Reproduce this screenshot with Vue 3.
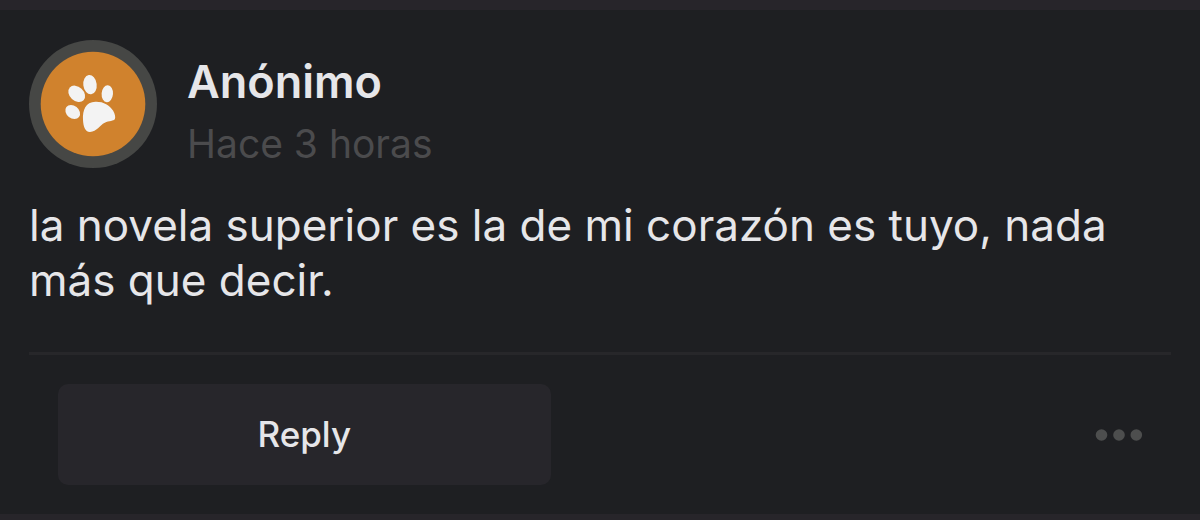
<script setup>
const comment = {
  author: 'Anónimo',
  time: 'Hace 3 horas',
  text: 'la novela superior es la de mi corazón es tuyo, nada más que decir.'
}
</script>

<template>
  <main class="feed">
    <article class="card">
      <header class="head">
        <svg class="avatar" viewBox="0 0 128 128" aria-hidden="true">
          <circle cx="64" cy="64" r="64" fill="#464745" />
          <circle cx="64" cy="64" r="52.3" fill="#d0822d" />
          <g fill="#f3f3f3">
            <ellipse cx="43.7" cy="72" rx="8" ry="6.2" transform="rotate(38 43.7 72)" />
            <ellipse cx="47.7" cy="53.8" rx="9.4" ry="7" transform="rotate(43 47.7 53.8)" />
            <ellipse cx="61" cy="44.7" rx="6.7" ry="9.7" transform="rotate(-7 61 44.7)" />
            <ellipse cx="78.3" cy="53.7" rx="5.7" ry="8.5" transform="rotate(4 78.3 53.7)" />
            <path d="M66.500 61.700C74.500 61.500 80.500 65 84 70.500C86 73.700 86.800 77.500 85.800 79.300C84.800 81.100 80 80.800 75.800 82.800C70.500 85.300 68 91.800 61 92C56 92.100 54.300 86 54 80C53.500 70 56.500 62 66.500 61.700Z" />
          </g>
        </svg>
        <div class="meta">
          <h2 class="author">{{ comment.author }}</h2>
          <time class="time">{{ comment.time }}</time>
        </div>
      </header>
      <p class="text">{{ comment.text }}</p>
      <footer class="actions">
        <button class="reply" type="button">Reply</button>
        <button class="more" type="button" aria-label="More options">
          <svg width="48" height="12" viewBox="0 0 48 12" fill="#4d4e4e" aria-hidden="true">
            <circle cx="6.500" cy="6" r="5.800" />
            <circle cx="24" cy="6" r="5.800" />
            <circle cx="41.300" cy="6" r="5.800" />
          </svg>
        </button>
      </footer>
    </article>
  </main>
</template>

<style>
body {
  margin: 0;
  background: #27252a;
}
</style>

<style scoped>
.feed {
  padding: 10px 0 6px;
  background: #27252a;
  font-family: Inter, "Liberation Sans", sans-serif;
  color: #e6e6e9;
}
.card {
  padding: 30px 29px 29px;
  background: #1e1f22;
}
.head {
  display: flex;
  align-items: flex-end;
  gap: 30px;
}
.avatar {
  width: 128px;
  height: 128px;
  flex: none;
}
.meta {
  display: flex;
  flex-direction: column;
  gap: 12px;
}
.author {
  margin: 0;
  font-size: 45px;
  line-height: 52px;
  font-weight: 600;
}
.time {
  font-size: 39px;
  line-height: 48px;
  color: #4b4b4d;
}
.text {
  margin: 30px 0 44px;
  font-size: 44px;
  line-height: 55px;
}
.actions {
  display: flex;
  align-items: center;
  justify-content: space-between;
  padding: 29px 28px 0 29px;
  border-top: 3px solid #27272a;
}
.reply {
  width: calc(50% - 50px);
  padding: 28px 0;
  border: 0;
  border-radius: 10px;
  background: #27262b;
  color: inherit;
  font: 500 35px/45px Inter, "Liberation Sans", sans-serif;
}
.more {
  display: flex;
  padding: 0;
  border: 0;
  background: none;
}
</style>
